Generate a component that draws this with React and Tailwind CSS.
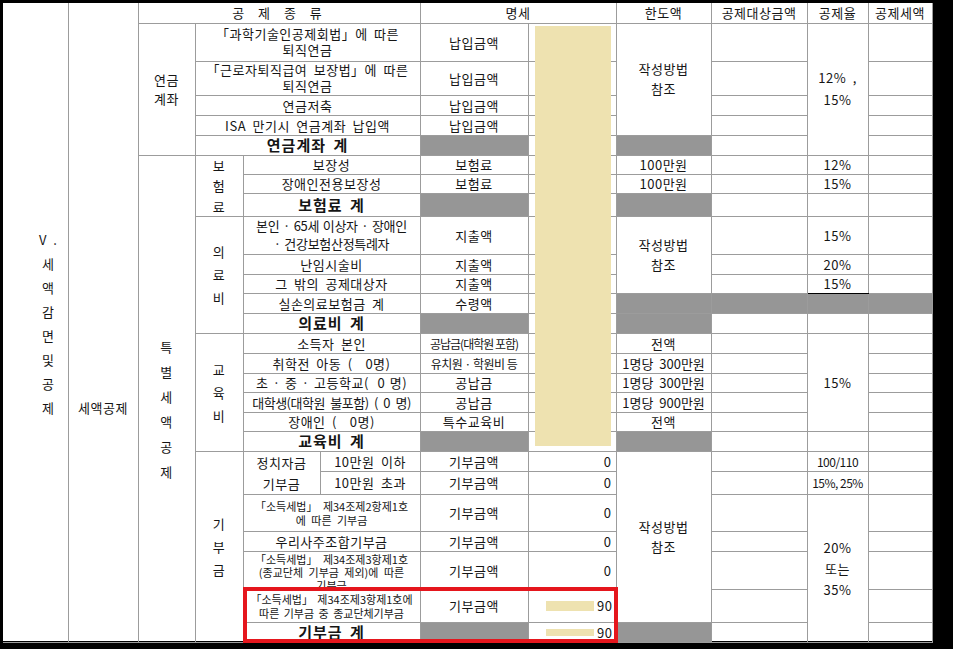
import clsx from 'clsx';

const Td = ({ className, children, ...rest }) => (
  <td
    className={clsx('border border-[#9c9c9c] p-0 text-center align-middle whitespace-nowrap', className)}
    {...rest}
  >
    {children}
  </td>
);

const Gray = ({ className, ...rest }) => <Td className={clsx('bg-[#969696]', className)} {...rest} />;

const Vert = ({ chars, className }) => (
  <div className={clsx('flex flex-col items-center', className)}>
    {chars.map((c, i) => (
      <span key={i}>{c}</span>
    ))}
  </div>
);

const Sum = ({ children }) => <span className="text-[15px] font-bold tracking-[1px]">{children}</span>;

const Bar90 = ({ h }) => (
  <div className="flex items-center justify-end gap-[3px] pr-[3px]">
    <span className={clsx('w-[48px] bg-[#eee2b0]', h)} />
    <span>90</span>
  </div>
);

export default function App() {
  return (
    <div className="relative w-[953px] h-[649px] bg-black overflow-hidden font-['Noto_Sans_CJK_KR',sans-serif] text-[13px] leading-[15px] tracking-[0.5px] [word-spacing:3px] text-[#151515]">
      <div className="absolute left-[3px] top-[3px] w-[929px] h-[638px] bg-white">
        <table className="table-fixed border-collapse w-[929px]">
          <colgroup>
            <col className="w-[65px]" />
            <col className="w-[70px]" />
            <col className="w-[57px]" />
            <col className="w-[48px]" />
            <col className="w-[77px]" />
            <col className="w-[100px]" />
            <col className="w-[108px]" />
            <col className="w-[88px]" />
            <col className="w-[95px]" />
            <col className="w-[96px]" />
            <col className="w-[61px]" />
            <col className="w-[64px]" />
          </colgroup>
          <tbody>
            {/* header */}
            <tr className="h-[20px]">
              <Td rowSpan={27} className="border-l-0 border-t-0 align-top">
                <Vert chars={['V .', '세', '액', '감', '면', '및', '공', '제']} className="pt-[225px] pl-[26px] leading-[24px]" />
              </Td>
              <Td rowSpan={27} className="border-t-0 align-top">
                <div className="pt-[397px]">세액공제</div>
              </Td>
              <Td colSpan={4} className="border-t-0 tracking-[4px]">공 제 종 류</Td>
              <Td colSpan={2} className="border-t-0">명세</Td>
              <Td className="border-t-0">한도액</Td>
              <Td className="border-t-0">공제대상금액</Td>
              <Td className="border-t-0">공제율</Td>
              <Td className="border-t-0">공제세액</Td>
            </tr>

            {/* 연금계좌 */}
            <tr className="h-[38px]">
              <Td rowSpan={5}>
                <div className="leading-[19px]">연금<br />계좌</div>
              </Td>
              <Td colSpan={3}>
                <div className="leading-[16px]">「과학기술인공제회법」에 따른<br />퇴직연금</div>
              </Td>
              <Td>납입금액</Td>
              <Td />
              <Td rowSpan={4}>
                <div className="leading-[20px]">작성방법<br />참조</div>
              </Td>
              <Td />
              <Td rowSpan={5}>
                <div className="leading-[22px]">12% ,<br />15%</div>
              </Td>
              <Td />
            </tr>
            <tr className="h-[34px]">
              <Td colSpan={3}>
                <div className="leading-[16px]">「근로자퇴직급여 보장법」에 따른<br />퇴직연금</div>
              </Td>
              <Td>납입금액</Td>
              <Td />
              <Td />
              <Td />
            </tr>
            <tr className="h-[20px]">
              <Td colSpan={3}>연금저축</Td>
              <Td>납입금액</Td>
              <Td />
              <Td />
              <Td />
            </tr>
            <tr className="h-[20px]">
              <Td colSpan={3}>ISA 만기시 연금계좌 납입액</Td>
              <Td>납입금액</Td>
              <Td />
              <Td />
              <Td />
            </tr>
            <tr className="h-[20px]">
              <Td colSpan={3}><Sum>연금계좌 계</Sum></Td>
              <Gray />
              <Td />
              <Gray />
              <Td />
              <Td />
            </tr>

            {/* 보험료 */}
            <tr className="h-[19px]">
              <Td rowSpan={21} className="align-top">
                <Vert chars={['특', '별', '세', '액', '공', '제']} className="pt-[178px] leading-[25px]" />
              </Td>
              <Td rowSpan={3}>
                <div className="h-[56px] flex flex-col items-center justify-between">
                  <span>보</span>
                  <span>험</span>
                  <span>료</span>
                </div>
              </Td>
              <Td colSpan={2}>보장성</Td>
              <Td>보험료</Td>
              <Td />
              <Td>100만원</Td>
              <Td />
              <Td>12%</Td>
              <Td />
            </tr>
            <tr className="h-[19px]">
              <Td colSpan={2}>장애인전용보장성</Td>
              <Td>보험료</Td>
              <Td />
              <Td>100만원</Td>
              <Td />
              <Td>15%</Td>
              <Td />
            </tr>
            <tr className="h-[23px]">
              <Td colSpan={2}><Sum>보험료 계</Sum></Td>
              <Gray />
              <Td />
              <Gray />
              <Td />
              <Td />
              <Td />
            </tr>

            {/* 의료비 */}
            <tr className="h-[38px]">
              <Td rowSpan={5}>
                <Vert chars={['의', '료', '비']} className="leading-[23px]" />
              </Td>
              <Td colSpan={2}>
                <div className="leading-[18px] tracking-[-0.3px] [word-spacing:1px]">본인 · 65세 이상자 · 장애인<br />· 건강보험산정특례자</div>
              </Td>
              <Td>지출액</Td>
              <Td />
              <Td rowSpan={3}>
                <div className="leading-[20px]">작성방법<br />참조</div>
              </Td>
              <Td />
              <Td>15%</Td>
              <Td />
            </tr>
            <tr className="h-[20px]">
              <Td colSpan={2}>난임시술비</Td>
              <Td>지출액</Td>
              <Td />
              <Td />
              <Td className="border-t-black">20%</Td>
              <Td />
            </tr>
            <tr className="h-[19px]">
              <Td colSpan={2}>그 밖의 공제대상자</Td>
              <Td>지출액</Td>
              <Td />
              <Td />
              <Td className="border-b-black">15%</Td>
              <Td />
            </tr>
            <tr className="h-[20px]">
              <Td colSpan={2}>실손의료보험금 계</Td>
              <Td>수령액</Td>
              <Td />
              <Gray />
              <Gray />
              <Gray />
              <Gray />
            </tr>
            <tr className="h-[20px]">
              <Td colSpan={2}><Sum>의료비 계</Sum></Td>
              <Gray />
              <Td />
              <Gray />
              <Td />
              <Td />
              <Td />
            </tr>

            {/* 교육비 */}
            <tr className="h-[20px]">
              <Td rowSpan={6}>
                <Vert chars={['교', '육', '비']} className="leading-[23px]" />
              </Td>
              <Td colSpan={2}>소득자 본인</Td>
              <Td className="text-[12px] tracking-[-1px] [word-spacing:0px]">공납금(대학원 포함)</Td>
              <Td />
              <Td>전액</Td>
              <Td />
              <Td rowSpan={5}>15%</Td>
              <Td />
            </tr>
            <tr className="h-[20px]">
              <Td colSpan={2}>취학전 아동 (&nbsp;&nbsp;0명)</Td>
              <Td className="text-[12px] tracking-[-0.5px] [word-spacing:0px]">유치원 · 학원비 등</Td>
              <Td />
              <Td className="tracking-[0px]">1명당 300만원</Td>
              <Td />
              <Td />
            </tr>
            <tr className="h-[19px]">
              <Td colSpan={2} className="[word-spacing:1px]">초 · 중 · 고등학교(&nbsp;&nbsp;0 명)</Td>
              <Td>공납금</Td>
              <Td />
              <Td className="tracking-[0px]">1명당 300만원</Td>
              <Td />
              <Td />
            </tr>
            <tr className="h-[20px]">
              <Td colSpan={2} className="tracking-[-0.5px]">대학생(대학원 불포함) (&nbsp;0 명)</Td>
              <Td>공납금</Td>
              <Td />
              <Td className="tracking-[0px]">1명당 900만원</Td>
              <Td />
              <Td />
            </tr>
            <tr className="h-[19px]">
              <Td colSpan={2}>장애인 (&nbsp;&nbsp;0명)</Td>
              <Td>특수교육비</Td>
              <Td />
              <Td>전액</Td>
              <Td />
              <Td />
            </tr>
            <tr className="h-[20px]">
              <Td colSpan={2}><Sum>교육비 계</Sum></Td>
              <Gray />
              <Td />
              <Gray />
              <Td />
              <Td />
              <Td />
            </tr>

            {/* 기부금 */}
            <tr className="h-[20px]">
              <Td rowSpan={7}>
                <Vert chars={['기', '부', '금']} className="leading-[23px]" />
              </Td>
              <Td rowSpan={2}>
                <div className="leading-[21px]">정치자금<br />기부금</div>
              </Td>
              <Td>10만원 이하</Td>
              <Td>기부금액</Td>
              <Td className="text-right pr-[4px]">0</Td>
              <Td rowSpan={6}>
                <div className="leading-[20px]">작성방법<br />참조</div>
              </Td>
              <Td />
              <Td className="text-[12px] tracking-[-0.5px]">100/110</Td>
              <Td />
            </tr>
            <tr className="h-[21px]">
              <Td>10만원 초과</Td>
              <Td>기부금액</Td>
              <Td className="text-right pr-[4px]">0</Td>
              <Td />
              <Td className="text-[12px] tracking-[-0.5px] [word-spacing:0px]">15%, 25%</Td>
              <Td />
            </tr>
            <tr className="h-[37px]">
              <Td colSpan={2} className="text-[11px] tracking-[0px]">
                <div className="leading-[14px]">「소득세법」 제34조제2항제1호<br />에 따른 기부금</div>
              </Td>
              <Td>기부금액</Td>
              <Td className="text-right pr-[4px]">0</Td>
              <Td />
              <Td rowSpan={5}>
                <div className="leading-[21px]">20%<br />또는<br />35%</div>
              </Td>
              <Td />
            </tr>
            <tr className="h-[20px]">
              <Td colSpan={2}>우리사주조합기부금</Td>
              <Td>기부금액</Td>
              <Td className="text-right pr-[4px]">0</Td>
              <Td />
              <Td />
            </tr>
            <tr className="h-[38px]">
              <Td colSpan={2} className="text-[11px] tracking-[0px] align-top">
                <div className="h-[36px] pt-[1px] leading-[13px]">
                  「소득세법」 제34조제3항제1호<br />(종교단체 기부금 제외)에 따른<br />기부금
                </div>
              </Td>
              <Td>기부금액</Td>
              <Td className="text-right pr-[4px]">0</Td>
              <Td />
              <Td />
            </tr>
            <tr className="h-[33px]">
              <Td colSpan={2} className="text-[11px] tracking-[0px] [word-spacing:2px]">
                <div className="leading-[14px]">「소득세법」 제34조제3항제1호에<br />따른 기부금 중 종교단체기부금</div>
              </Td>
              <Td>기부금액</Td>
              <Td><Bar90 h="h-[10px]" /></Td>
              <Td />
              <Td />
            </tr>
            <tr className="h-[20px]">
              <Td colSpan={2}><Sum>기부금 계</Sum></Td>
              <Gray />
              <Td><Bar90 h="h-[7px]" /></Td>
              <Gray />
              <Td />
              <Td />
            </tr>
          </tbody>
        </table>
      </div>

      {/* masked amounts */}
      <div className="absolute left-[535px] top-[26px] w-[76px] h-[420px] bg-[#eee2b0]" />

      {/* highlight */}
      <div className="absolute left-[243px] top-[587px] w-[375px] h-[56px] border-4 border-[#e5161d]" />
    </div>
  );
}
